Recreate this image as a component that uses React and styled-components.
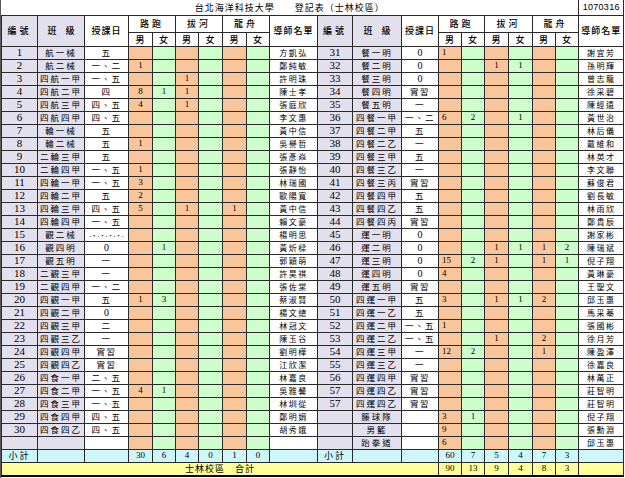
import React from "react";
import styled, { createGlobalStyle } from "styled-components";

const Global = createGlobalStyle`
  html, body { margin: 0; padding: 0; background: #fff; }
  body { font-family: "Noto Sans CJK TC", "Liberation Sans", sans-serif; color: #000; }
`;

const COLORS = {
  lav: "#e3e0ee",
  peach: "#f9c69c",
  green: "#ccffcc",
  cyan: "#cdf7fb",
  yellow: "#ffff99",
  line: "#2a2a2a",
};

const CJK = '"Noto Sans CJK TC", "Liberation Sans", sans-serif';
const SERIF = '"Liberation Serif", "Noto Sans CJK TC", serif';

const Page = styled.div`
  width: 623px;
  height: 478px;
  border-left: 1px solid #5a5a5a;
  overflow: hidden;
`;

const Sheet = styled.table`
  border-collapse: collapse;
  table-layout: fixed;
  width: 622px;
`;

const Row = styled.tr`
  height: ${(p) => p.$h || 13}px;
`;

const Cell = styled.td`
  border: 1px solid ${COLORS.line};
  padding: 0;
  padding-left: ${(p) => (p.$align === "left" ? "3px" : "0")};
  background: ${(p) => p.$bg || "#fff"};
  text-align: ${(p) => p.$align || "center"};
  vertical-align: middle;
  font-family: ${(p) => (p.$num ? SERIF : CJK)};
  font-size: ${(p) => p.$size || 9}px;
  letter-spacing: ${(p) => p.$ls ?? 1}px;
  line-height: 11px;
  white-space: nowrap;
  overflow: hidden;
`;

const HeadCell = styled.td`
  border: 1px solid ${COLORS.line};
  padding: 0;
  background: ${(p) => p.$bg || "#fff"};
  text-align: center;
  vertical-align: middle;
  font-family: ${CJK};
  font-size: 9px;
  font-weight: 500;
  letter-spacing: ${(p) => p.$ls ?? 1}px;
  line-height: 11px;
  white-space: nowrap;
`;

const TitleCell = styled.td`
  border: none;
  padding: 0;
  text-align: center;
  vertical-align: middle;
  font-family: ${CJK};
  font-size: 9px;
  letter-spacing: 1px;
  line-height: 11px;
  white-space: pre;
`;

const DateCell = styled.td`
  border: 1px solid ${COLORS.line};
  border-top: none;
  padding: 0;
  text-align: center;
  vertical-align: middle;
  font-family: "Liberation Sans", sans-serif;
  font-size: 9px;
  letter-spacing: 0.3px;
  line-height: 11px;
`;

const TotalLabel = styled.td`
  border: 1px solid ${COLORS.line};
  border-bottom: 2px solid #000;
  padding: 0;
  background: ${COLORS.yellow};
  text-align: center;
  vertical-align: middle;
  font-family: ${CJK};
  font-size: 9px;
  letter-spacing: 1px;
  line-height: 11px;
`;

const TotalCell = styled(Cell)`
  border-bottom: 2px solid #000;
`;

const Dots = styled.span`
  font-size: 6px;
  letter-spacing: 0;
  vertical-align: middle;
`;

const widths = [36, 47, 44, 24, 23, 23, 24, 24, 23, 48, 35, 49, 37, 23, 23, 24, 24, 23, 23, 45];

const left = [
  [1, "航一械", "五", [], "方凱弘"],
  [2, "航二械", "一、二", [1], "鄭純敏"],
  [3, "四航一甲", "一、五", ["", "", 1], "許明珠"],
  [4, "四航二甲", "四", [8, 1, 1], "陳士孝"],
  [5, "四航三甲", "四、五", [4, "", 1], "張庭欣"],
  [6, "四航四甲", "四、五", [], "李文惠"],
  [7, "輪一械", "五", [], "黃中信"],
  [8, "輪二械", "五", [1], "吳譽哲"],
  [9, "二輪三甲", "五", [], "張彥焱"],
  [10, "二輪四甲", "一、五", [1], "張靜怡"],
  [11, "四輪一甲", "一、五", [3], "林瑞國"],
  [12, "四輪二甲", "五", [2], "歐陽寬"],
  [13, "四輪三甲", "四、五", [5, "", 1, "", 1], "黃中信"],
  [14, "四輪四甲", "一、五", [], "賴文豪"],
  [15, "觀二械", "DOTS", [], "楊明思"],
  [16, "觀四明", "0", ["", 1], "黃炘樑"],
  [17, "觀五明", "一", [], "郭穎萌"],
  [18, "二觀三甲", "一", [], "許昊祺"],
  [19, "二觀四甲", "一、二", [], "張佐棠"],
  [20, "四觀一甲", "五", [1, 3], "蔡淑賢"],
  [21, "四觀二甲", "0", [], "楊文總"],
  [22, "四觀三甲", "二", [], "林冠文"],
  [23, "四觀三乙", "一", [], "陳玉谷"],
  [24, "四觀四甲", "實習", [], "劉明樺"],
  [25, "四觀四乙", "實習", [], "江欣潔"],
  [26, "四食一甲", "二、五", [], "林嘉良"],
  [27, "四食二甲", "一、五", [4, 1], "吳雅馨"],
  [28, "四食三甲", "一、五", [], "林圳從"],
  [29, "四食四甲", "四、五", [], "鄭明娟"],
  [30, "四食四乙", "四、五", [], "胡秀娥"],
  ["", "", "", [], ""],
];

const right = [
  [31, "餐一明", "0", [1], "謝宜芳"],
  [32, "餐二明", "0", ["", "", 1, 1], "孫明輝"],
  [33, "餐三明", "0", [], "曾志龍"],
  [34, "餐四明", "實習", [], "徐采碧"],
  [35, "餐五明", "一", [], "陳經遠"],
  [36, "四餐一甲", "一、二", [6, 2, "", 1], "黃世治"],
  [37, "四餐二甲", "五", [], "林后儀"],
  [38, "四餐二乙", "一", [], "戴維和"],
  [39, "四餐三甲", "五", [], "林英才"],
  [40, "四餐三乙", "一", [], "李文聯"],
  [41, "四餐三丙", "實習", [], "蘇俊君"],
  [42, "四餐四甲", "五", [], "劉長敏"],
  [43, "四餐四乙", "五", [], "林雨欣"],
  [44, "四餐四丙", "實習", [], "鄭貴辰"],
  [45, "運一明", "0", [], "謝家彬"],
  [46, "運二明", "0", ["", "", 1, 1, 1, 2], "陳瑞斌"],
  [47, "運三明", "0", [15, 2, 1, "", 1, 1], "倪子翔"],
  [48, "運四明", "0", [4], "黃琳豪"],
  [49, "運五明", "實習", [], "王聖文"],
  [50, "四運一甲", "五", [3, "", 1, 1, 2], "邱玉惠"],
  [51, "四運一乙", "五", [], "馬采蓁"],
  [52, "四運二甲", "一、五", [1], "張國彬"],
  [53, "四運二乙", "一、五", ["", "", 1, "", 2], "徐月芳"],
  [54, "四運三甲", "一", [12, 2, "", "", 1], "陳盈澤"],
  [55, "四運三乙", "一", [], "徐嘉良"],
  [56, "四運四甲", "實習", [], "林萬正"],
  [57, "四運四乙", "實習", [], "莊智明"],
  [57, "四運四乙", "實習", [], "莊智明"],
  ["", "籐球隊", "", [3, 1], "倪子翔"],
  ["", "男籃", "", [9], "張勳淵"],
  ["", "跆拳道", "", [6], "邱玉惠"],
];

const leftSub = [30, 6, 4, 0, 1, 0];
const rightSub = [60, 7, 5, 4, 7, 3];
const grand = [90, 13, 9, 4, 8, 3];

const sportBg = (i) => (i % 2 === 0 ? COLORS.peach : COLORS.green);

function Half({ item, side }) {
  const [no, cls, day, nums, teacher] = item;
  const vals = [0, 1, 2, 3, 4, 5].map((i) => (nums[i] === undefined ? "" : nums[i]));
  const isDigit = /^[0-9]$/.test(day);
  return (
    <>
      <Cell $bg={COLORS.lav} $num $size={11} $ls={0}>{no}</Cell>
      <Cell $bg={COLORS.lav} $size={8.5} $ls={2}>{cls}</Cell>
      <Cell $num={isDigit} $size={isDigit ? 10 : 8.5} $ls={isDigit ? 0 : 1.5}>
        {day === "DOTS" ? <Dots>-·-·-·-·-</Dots> : day}
      </Cell>
      {vals.map((v, i) => (
        <Cell
          key={i}
          $bg={sportBg(i)}
          $num
          $size={9}
          $ls={0}
          $align={side === "right" && i === 0 ? "left" : "center"}
        >
          {v}
        </Cell>
      ))}
      <Cell $size={8} $ls={1.5}>{teacher}</Cell>
    </>
  );
}

function HeaderHalf() {
  return (
    <>
      <HeadCell rowSpan={2} $bg={COLORS.lav} $ls={3}>編號</HeadCell>
      <HeadCell rowSpan={2} $bg={COLORS.lav} $ls={0}>班　級</HeadCell>
      <HeadCell rowSpan={2}>授課日</HeadCell>
      <HeadCell colSpan={2} $ls={3}>路跑</HeadCell>
      <HeadCell colSpan={2} $ls={3}>拔河</HeadCell>
      <HeadCell colSpan={2} $ls={3}>龍舟</HeadCell>
      <HeadCell rowSpan={2}>導師名單</HeadCell>
    </>
  );
}

function SubHeaderHalf() {
  return (
    <>
      {["男", "女", "男", "女", "男", "女"].map((t, i) => (
        <HeadCell key={i}>{t}</HeadCell>
      ))}
    </>
  );
}

function SubtotalHalf({ values }) {
  return (
    <>
      <Cell $bg={COLORS.cyan} $ls={2}>小計</Cell>
      <Cell $bg={COLORS.cyan} />
      <Cell $bg={COLORS.cyan} />
      {values.map((v, i) => (
        <Cell key={i} $bg={COLORS.cyan} $num $size={9} $ls={0}>{v}</Cell>
      ))}
      <Cell $bg={COLORS.cyan} />
    </>
  );
}

export default function App() {
  return (
    <Page>
      <Global />
      <Sheet>
        <colgroup>
          {widths.map((w, i) => (
            <col key={i} style={{ width: w }} />
          ))}
        </colgroup>
        <tbody>
          <Row $h={15}>
            <TitleCell colSpan={19}>{"台北海洋科技大學　　登記表（士林校區）"}</TitleCell>
            <DateCell>1070316</DateCell>
          </Row>
          <Row $h={17}>
            <HeaderHalf />
            <HeaderHalf />
          </Row>
          <Row $h={14}>
            <SubHeaderHalf />
            <SubHeaderHalf />
          </Row>
          {left.map((item, idx) => (
            <Row key={idx}>
              <Half item={item} side="left" />
              <Half item={right[idx]} side="right" />
            </Row>
          ))}
          <Row>
            <SubtotalHalf values={leftSub} />
            <SubtotalHalf values={rightSub} />
          </Row>
          <Row $h={14}>
            <TotalLabel colSpan={13}>士林校區　合計</TotalLabel>
            {grand.map((v, i) => (
              <TotalCell key={i} $bg={COLORS.yellow} $num $size={9} $ls={0}>{v}</TotalCell>
            ))}
            <TotalCell $bg={COLORS.yellow} />
          </Row>
        </tbody>
      </Sheet>
    </Page>
  );
}
